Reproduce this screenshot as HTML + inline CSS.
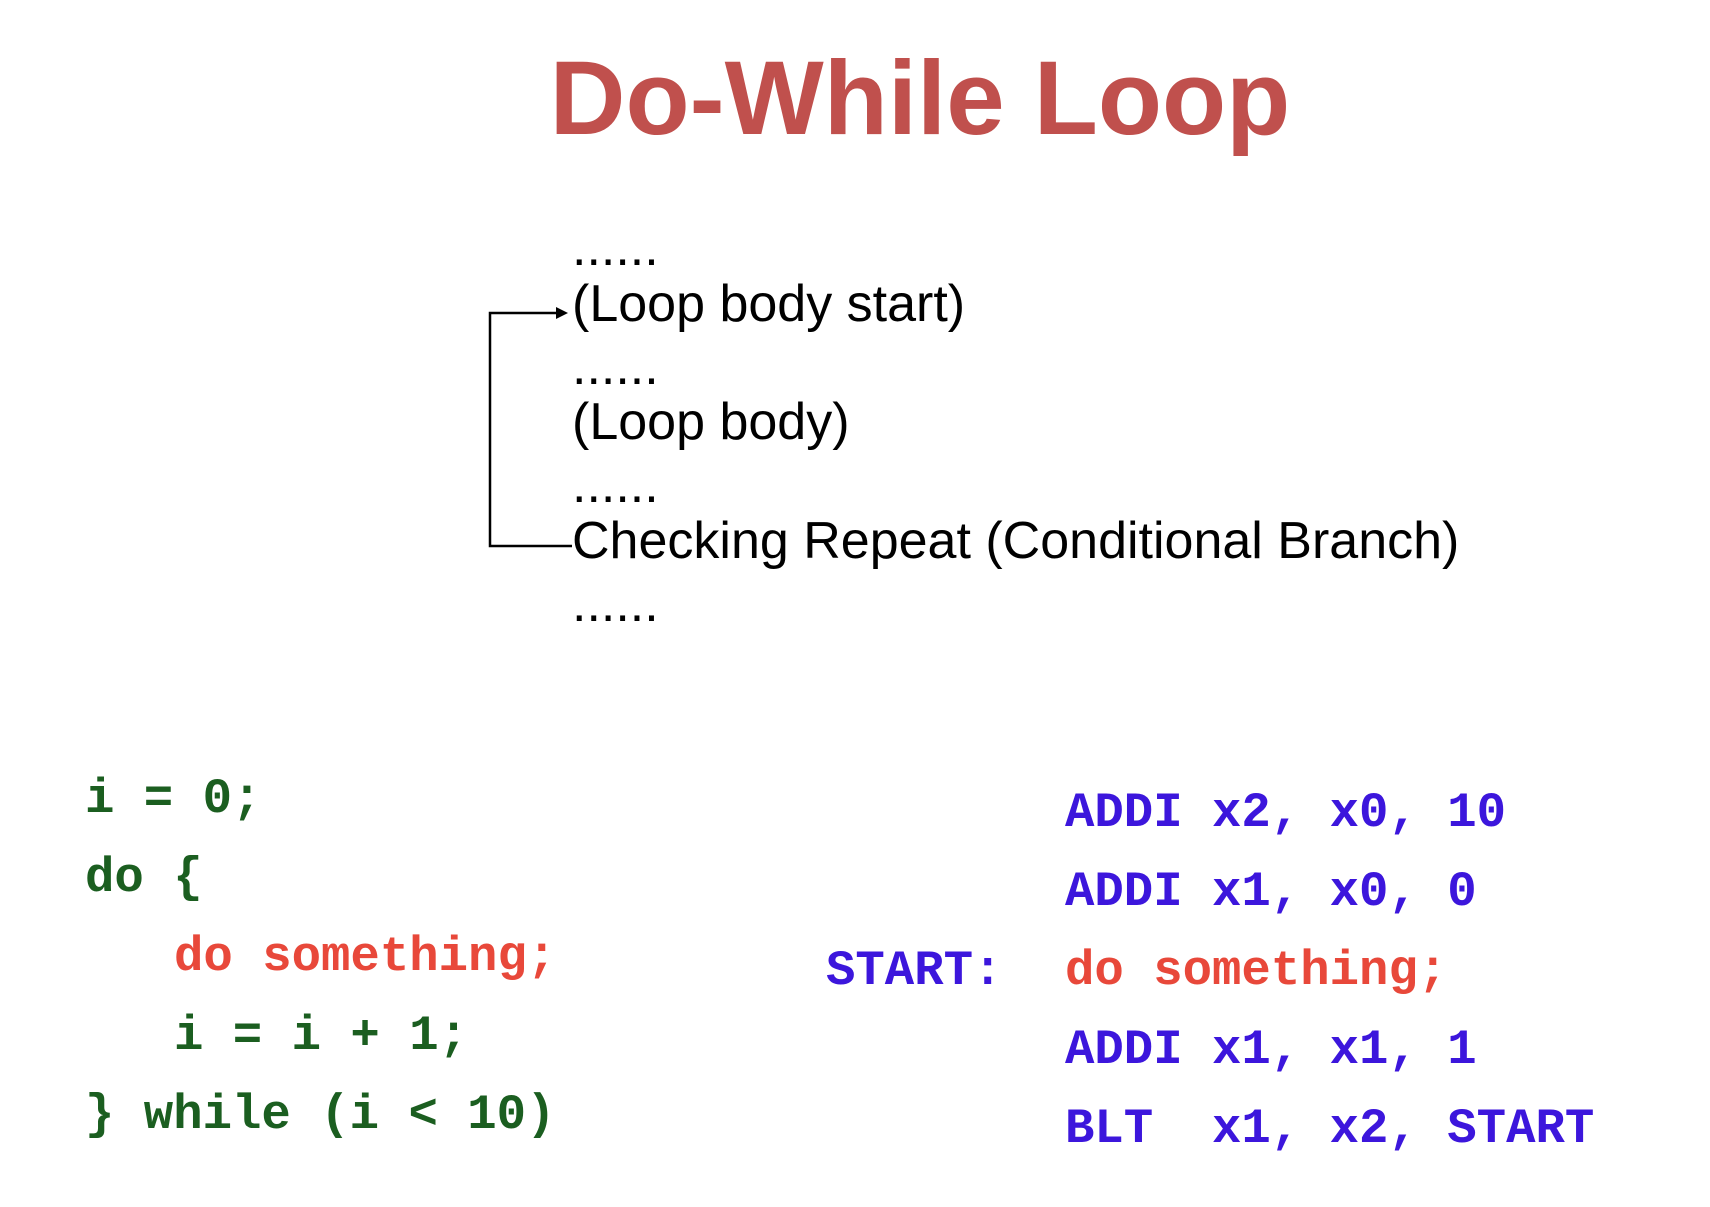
<!DOCTYPE html>
<html><head><meta charset="utf-8"><style>
body{margin:0;width:1710px;height:1207px;background:#fff;position:relative;overflow:hidden;font-family:"Liberation Sans",sans-serif}
.a{position:absolute;white-space:pre;line-height:1}
.t{font-size:105px;font-weight:bold;color:#c0504d;left:420px;top:46px;width:1000px;text-align:center}
.d{font-size:52px;color:#000;left:572px}
.m{font-family:"Liberation Mono",monospace;font-weight:bold;font-size:49px}
.g{color:#1b5e20}.r{color:#e8483a}.b{color:#3c16dc}
</style></head><body>
<div class="a t">Do-While Loop</div>
<div class="a d" style="top:222px">......</div>
<div class="a d" style="top:278px">(Loop body start)</div>
<div class="a d" style="top:341px">......</div>
<div class="a d" style="top:396px">(Loop body)</div>
<div class="a d" style="top:459px">......</div>
<div class="a d" style="top:515px">Checking Repeat (Conditional Branch)</div>
<div class="a d" style="top:578px">......</div>
<svg class="a" style="left:0;top:0" width="1710" height="1207">
<polyline points="572,546 490,546 490,313 560,313" fill="none" stroke="#000" stroke-width="2.5"/>
<polygon points="568,313 556,307 556,319" fill="#000"/>
</svg>
<div class="a m g" style="left:85px;top:775px">i = 0;</div>
<div class="a m g" style="left:85px;top:854px">do {</div>
<div class="a m r" style="left:174px;top:933px">do something;</div>
<div class="a m g" style="left:174px;top:1012px">i = i + 1;</div>
<div class="a m g" style="left:85px;top:1091px">} while (i &lt; 10)</div>
<div class="a m b" style="left:1065px;top:789px">ADDI x2, x0, 10</div>
<div class="a m b" style="left:1065px;top:868px">ADDI x1, x0, 0</div>
<div class="a m b" style="left:826px;top:947px">START:</div>
<div class="a m r" style="left:1065px;top:947px">do something;</div>
<div class="a m b" style="left:1065px;top:1026px">ADDI x1, x1, 1</div>
<div class="a m b" style="left:1065px;top:1105px">BLT  x1, x2, START</div>
</body></html>
